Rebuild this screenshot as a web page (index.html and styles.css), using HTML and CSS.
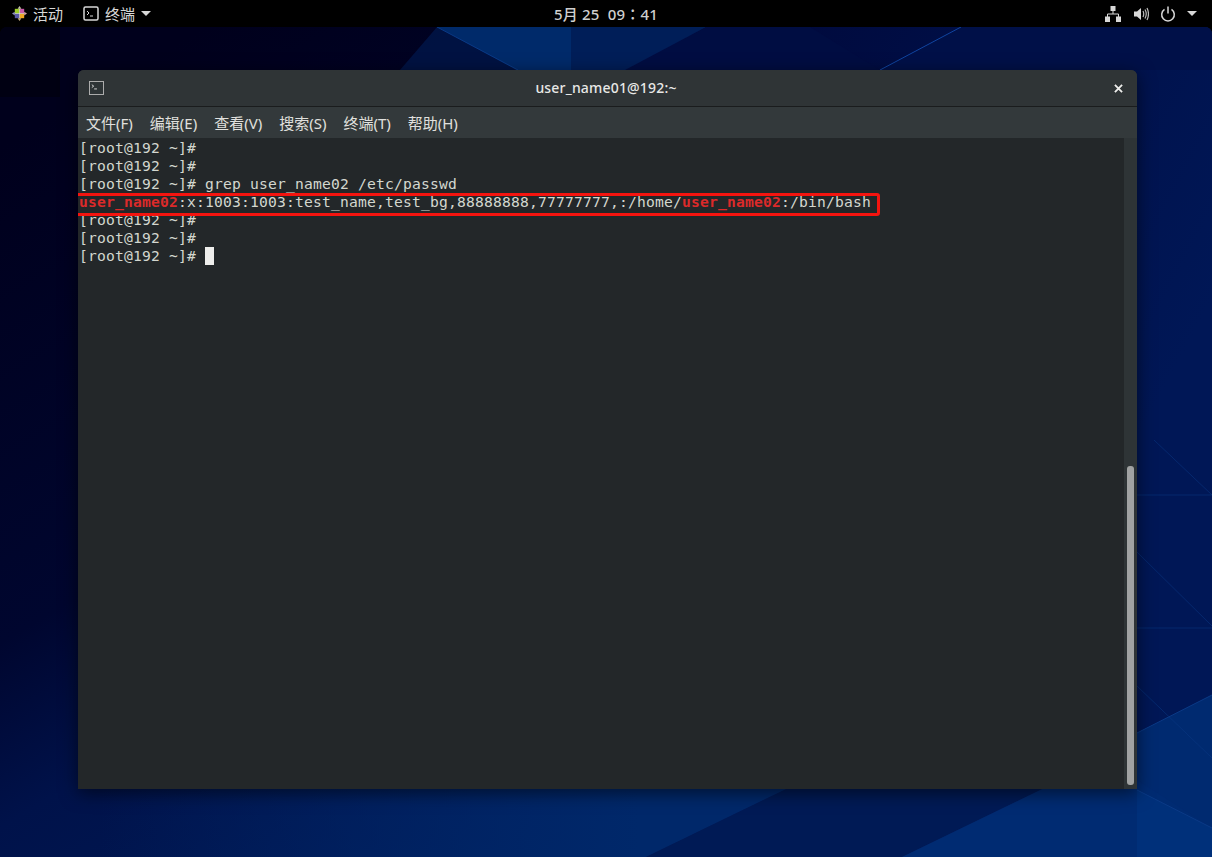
FILE: index.html
```html
<!DOCTYPE html>
<html lang="zh">
<head>
<meta charset="utf-8">
<title>终端</title>
<link rel="stylesheet" href="styles.css">
</head>
<body>
<svg class="wallpaper" viewBox="0 27 1212 830" aria-hidden="true">
  <defs>
    <linearGradient id="base" gradientUnits="userSpaceOnUse" x1="80" y1="100" x2="700" y2="1150">
      <stop offset="0" stop-color="#00001c"/>
      <stop offset="0.35" stop-color="#00062f"/>
      <stop offset="0.48" stop-color="#00124a"/>
      <stop offset="1" stop-color="#002768"/>
    </linearGradient>
    <linearGradient id="right" gradientUnits="userSpaceOnUse" x1="700" y1="27" x2="1212" y2="300">
      <stop offset="0" stop-color="#00083a"/>
      <stop offset="1" stop-color="#001756"/>
    </linearGradient>
    <linearGradient id="bottomleft" gradientUnits="userSpaceOnUse" x1="100" y1="0" x2="640" y2="0">
      <stop offset="0" stop-color="#00266a" stop-opacity="0"/>
      <stop offset="1" stop-color="#00286a"/>
    </linearGradient>
  </defs>
  <rect y="27" width="1212" height="830" fill="url(#base)"/>
  <polygon points="706,27 1212,27 1212,740 706,740" fill="url(#right)"/>
  <polygon points="0,27 60,27 60,97 0,97" fill="#000012"/>
  <polygon points="437,27 706,27 540,120 520,72" fill="#002a6a"/>
  <polygon points="571,27 706,27 625,72 571,72" fill="#001e58"/>
  <polygon points="400,70 437,27 518,70" fill="#001a50" opacity=".7"/>
  <polygon points="625,70 706,27 810,27 880,70" fill="#000d42"/>
  <polygon points="880,70 961,27 1212,27 1212,70" fill="#001048"/>
  <polygon points="1137,733 1212,695 1212,857 1137,857" fill="#002a70"/>
  <polygon points="100,780 805,780 646,857 100,857" fill="url(#bottomleft)"/>
  <polygon points="805,780 1061,780 902,857 646,857" fill="#001a55"/>
  <polygon points="1061,780 1137,780 1212,828 1212,857 902,857" fill="#002b72"/>
  <polygon points="1137,790 1212,828 1212,857 1137,857" fill="#00307a"/>
  <g stroke="#0a3a86" stroke-width="1" fill="none">
    <path d="M437 27L518 70"/>
    <path d="M961 27L880 70" stroke="#1045a0"/>
    <path d="M1137 733L1212 695"/>
    <path d="M1137 790L1212 828"/>
    <path d="M1137 495H1212" opacity=".5"/>
    <path d="M1137 628H1212" opacity=".5"/>
    <path d="M1137 552L1212 626" opacity=".5"/>
    <path d="M1137 686L1212 758" opacity=".5"/>
    <path d="M1154 440L1212 495" opacity=".5"/>
  </g>
</svg>

<header class="topbar">
  <div class="topbar-left">
    <span class="activities">
      <svg class="logo" viewBox="0 0 16 16" aria-hidden="true">
        <polygon points="8,8 8,3 13,3 13,8" fill="#c75aa8"/>
        <polygon points="8,8 13,8 13,13 8,13" fill="#efa724"/>
        <polygon points="8,8 8,13 3,13 3,8" fill="#5a59a8"/>
        <polygon points="8,8 3,8 3,3 8,3" fill="#9ccd2a"/>
        <polygon points="8,0 10,3 6,3" fill="#c9c9a8"/>
        <polygon points="16,8 13,10 13,6" fill="#d8a8a8"/>
        <polygon points="8,16 6,13 10,13" fill="#c9b080"/>
        <polygon points="0,8 3,6 3,10" fill="#8f8fc0"/>
        <path d="M8 3V13M3 8H13" stroke="#e8e8e8" stroke-width=".7"/>
      </svg>
      <span>活动</span>
    </span>
    <span class="app-menu">
      <svg class="app-icon" viewBox="0 0 16 15" aria-hidden="true">
        <rect x="1" y="1" width="14" height="13" rx="1.5" fill="none" stroke="#d8d8d8" stroke-width="1.5"/>
        <path d="M4 5l2 2-2 2M7 10h3" fill="none" stroke="#d8d8d8" stroke-width="1"/>
      </svg>
      <span>终端</span>
      <i class="caret"></i>
    </span>
  </div>
  <div class="clock">5月 25&nbsp; 09<span class="clock-colon" lang="zh-TW">：</span>41</div>
  <div class="status">
    <svg class="status-net" viewBox="0 0 16 16" aria-hidden="true">
      <path d="M5.500 0h5v5h-5zM0 10.500h5V16H0zM11 10.500h5V16h-5z" fill="#d8d8d8"/>
      <path d="M8 5v3M2.500 11V8h11v3" fill="none" stroke="#d8d8d8" stroke-width="1"/>
    </svg>
    <svg class="status-vol" viewBox="0 0 16 16" aria-hidden="true">
      <path d="M1 5.500h3L8 2v12L4 10.500H1z" fill="#d8d8d8"/>
      <path d="M10 5q1.500 3 0 6M12 3.500q2.500 4.500 0 9M14 2q3 6 0 12" fill="none" stroke="#bbb" stroke-width="1.200"/>
    </svg>
    <svg class="status-power" viewBox="0 0 16 16" aria-hidden="true">
      <path d="M4.500 3.400a6.300 6.300 0 1 0 7 0" fill="none" stroke="#d8d8d8" stroke-width="1.500"/>
      <path d="M8 0.500v7" fill="none" stroke="#d8d8d8" stroke-width="1.500"/>
    </svg>
    <i class="caret"></i>
  </div>
</header>

<main class="window">
  <div class="titlebar">
    <svg class="title-icon" viewBox="0 0 16 15" aria-hidden="true">
      <rect x="0.500" y="0.500" width="15" height="14" fill="#2e3436" stroke="#b5b5b5"/>
      <path d="M3 4l2 1.500L3 7M5.500 8.500h3" fill="none" stroke="#ddd" stroke-width="1"/>
    </svg>
    <span class="title">user_name01@192:~</span>
    <svg class="close" viewBox="0 0 10 10" aria-hidden="true">
      <path d="M1 1L9 9M9 1L1 9" stroke="#eeeeec" stroke-width="2"/>
    </svg>
  </div>
  <nav class="menubar">
    <span>文件(F)</span>
    <span>编辑(E)</span>
    <span>查看(V)</span>
    <span>搜索(S)</span>
    <span>终端(T)</span>
    <span>帮助(H)</span>
  </nav>
  <section class="terminal">
    <div class="screen">
      <div class="line">[root@192 ~]#</div>
      <div class="line">[root@192 ~]#</div>
      <div class="line">[root@192 ~]# grep user_name02 /etc/passwd</div>
      <div class="line"><b class="match">user_name02</b>:x:1003:1003:test_name,test_bg,88888888,77777777,:/home/<b class="match">user_name02</b>:/bin/bash</div>
      <div class="line">[root@192 ~]#</div>
      <div class="line">[root@192 ~]#</div>
      <div class="line">[root@192 ~]# <span class="cursor"></span></div>
      <div class="highlight"></div>
    </div>
    <div class="scrollbar"><div class="thumb"></div></div>
  </section>
</main>
</body>
</html>
```

FILE: styles.css
```css
html, body {
  margin: 0;
  height: 100%;
  overflow: hidden;
  background: #000;
}

body {
  position: relative;
  width: 1212px;
  height: 857px;
  font-family: "Noto Sans", "Noto Sans CJK SC", sans-serif;
}

.wallpaper {
  position: absolute;
  left: 0;
  top: 27px;
  width: 1212px;
  height: 830px;
  display: block;
  border-radius: 7px 7px 0 0;
}

.topbar {
  position: relative;
  height: 27px;
  background: #000;
  color: #d8d8d8;
  font-size: 15px;
  display: flex;
  align-items: center;
  justify-content: space-between;
}

.topbar-left {
  display: flex;
  align-items: center;
  padding-left: 12px;
  gap: 20px;
  width: 300px;
  box-sizing: border-box;
}

.activities {
  display: flex;
  align-items: center;
  gap: 6px;
}

.logo {
  width: 15px;
  height: 15px;
}

.app-menu {
  display: flex;
  align-items: center;
  gap: 6px;
}

.app-icon {
  width: 16px;
  height: 15px;
}

.caret {
  display: block;
  width: 0;
  height: 0;
  border-left: 5px solid transparent;
  border-right: 5px solid transparent;
  border-top: 5px solid #d8d8d8;
}

.clock {
  font-weight: 500;
  letter-spacing: 0.2px;
  color: #cfcfcf;
}

.clock-colon {
  font-family: "Noto Sans CJK TC", sans-serif;
}

.status {
  width: 300px;
  display: flex;
  align-items: center;
  justify-content: flex-end;
  padding-right: 15px;
  gap: 11px;
  box-sizing: border-box;
}

.status-net, .status-vol, .status-power {
  width: 16px;
  height: 16px;
}

.status-net {
  margin-right: 1px;
}

.window {
  position: absolute;
  left: 78px;
  top: 70px;
  width: 1059px;
  height: 719px;
  display: flex;
  flex-direction: column;
  border-radius: 6px 6px 0 0;
  background: #2e3436;
  box-shadow: 0 4px 18px rgba(0, 0, 0, 0.55);
  overflow: hidden;
}

.titlebar {
  height: 36px;
  flex: none;
  display: grid;
  grid-template-columns: 1fr auto 1fr;
  align-items: center;
  padding: 0 14px 0 11px;
  background: #2f3436;
  border-bottom: 1px solid #1a1c1d;
}

.title-icon {
  width: 15px;
  height: 14px;
}

.title {
  color: #e8e8e6;
  font-size: 14px;
  font-weight: 500;
  letter-spacing: 0.18px;
  margin-top: -2px;
}

.close {
  width: 9px;
  height: 9px;
  justify-self: end;
}

.menubar {
  height: 31px;
  flex: none;
  display: flex;
  align-items: center;
  gap: 17px;
  padding-left: 8px;
  color: #e0e0de;
  font-size: 15px;
  background: #33393b;
}

.terminal {
  flex: 1;
  display: flex;
  background: #232729;
  min-height: 0;
}

.screen {
  position: relative;
  flex: 1;
  padding: 1px 0 0 1px;
  color: #d3d7cf;
  font-family: "DejaVu Sans Mono", "Liberation Mono", monospace;
  font-size: 14.670px;
  letter-spacing: 0.175px;
  line-height: 18px;
}

.line {
  height: 18px;
  white-space: pre;
}

.match {
  color: #dc2a2a;
  font-weight: 700;
}

.cursor {
  display: inline-block;
  width: 9px;
  height: 18px;
  background: #eeeeec;
  vertical-align: top;
}

.highlight {
  position: absolute;
  left: -4px;
  top: 55px;
  width: 800px;
  height: 17px;
  border: 3px solid #f5140f;
  border-radius: 3px;
}

.scrollbar {
  width: 13px;
  flex: none;
  position: relative;
  background: #2e3436;
}

.thumb {
  position: absolute;
  left: 3px;
  right: 3px;
  top: 328px;
  bottom: 4px;
  border-radius: 3px;
  background: #a0a2a2;
}
```
